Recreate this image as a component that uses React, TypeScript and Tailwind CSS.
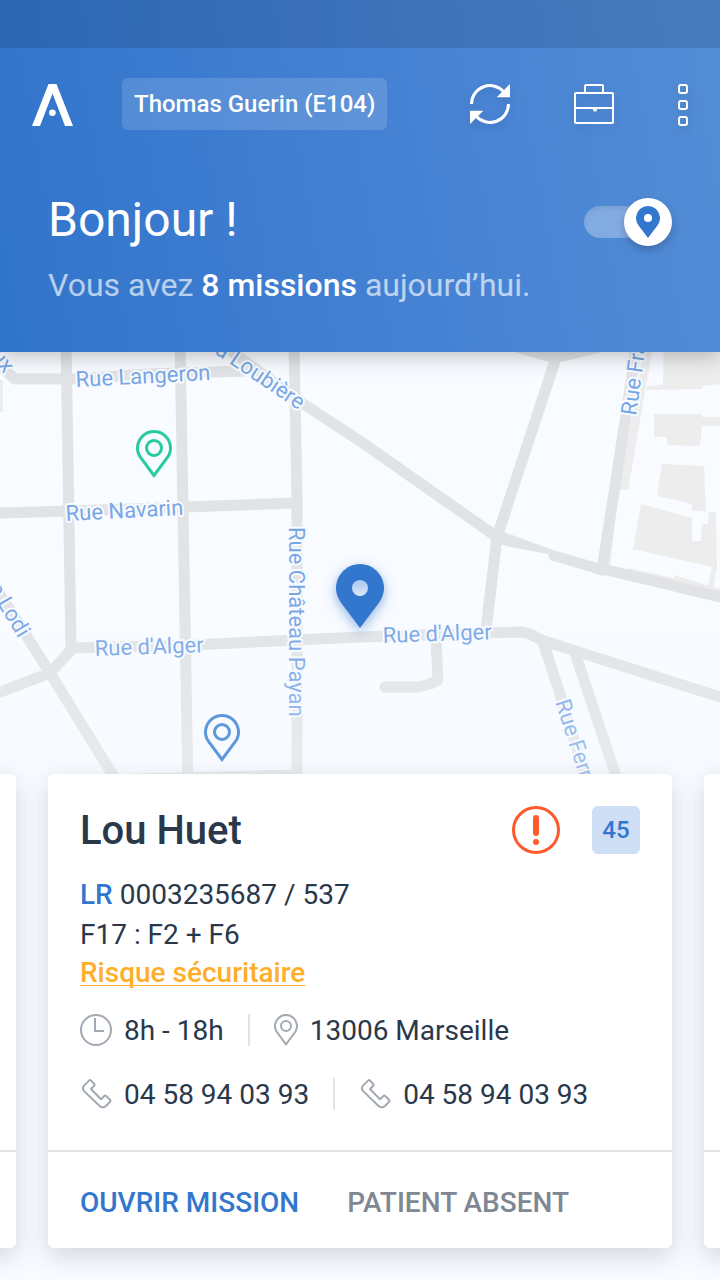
import { useState } from "react";

const PIN = "M18 45.5 L4.2 27 A16.5 16.5 0 1 1 31.8 27 Z";

const labels = [
  { text: "Rue Langeron", x: 76, y: 387, angle: -3 },
  { text: "Rue Navarin", x: 66, y: 521, angle: -3 },
  { text: "Rue d'Alger", x: 95, y: 656, angle: -2 },
  { text: "Rue d'Alger", x: 383, y: 643, angle: -2 },
  { text: "Rue Château Payan", x: 289, y: 527, angle: 90 },
  { text: "a Loubière", x: 214, y: 353, angle: 34 },
  { text: "e Lodi", x: -12, y: 588, angle: 59 },
  { text: "Rue Fra", x: 636, y: 416, angle: -82 },
  { text: "Rue Ferra", x: 555, y: 702, angle: 72 },
  { text: "ux", x: -10, y: 356, angle: 52 },
];

const roads = [
  "M66 340 L71 648",
  "M180 340 L188 790",
  "M294 340 L297 500 V790",
  "M0 366 L15 379 L72 379 L150 374 L245 371",
  "M195 325 L305 405 L360 441 L497 537",
  "M0 513 L72 511 L295 503",
  "M72 648 L190 645 L360 637 L522 632 Q530 633 541 640 L720 697",
  "M-14 572 L50 673 L122 790",
  "M-5 694 L50 673 L73 648",
  "M100 780 L297 775",
  "M556 358 L497 537 L486 630",
  "M638 335 L626 415 L602 570",
  "M603 569 L720 597",
  "M436 640 L438 680 L430 684 L418 687 H385",
  "M543 642 L561 697 L585 775",
  "M575 653 L620 788",
];

const buildings = [
  "664,340 720,340 720,384 702,386 702,389 647,390 647,386 663,385",
  "654,414 702,414 702,417 720,417 720,426 702,426 700,446 667,445 667,437 654,437",
  "662,464 704,466 706,511 692,511 692,504 657,496",
  "641,504 692,518 692,541 701,541 702,524 708,524 709,512 716,512 717,568 713,588 708,587 712,567 633,549",
  "628,568 674,578 674,575 720,589 720,598 628,574",
  "645,340 654,340 628,490 618,490 610,568 606,568",
  "0,380 3,380 3,412 0,412",
];

function CityMap() {
  return (
    <svg
      className="absolute inset-0 h-full w-full font-['Roboto',sans-serif]"
      viewBox="0 352 720 928"
      preserveAspectRatio="xMidYMin slice"
    >
      <defs>
        <linearGradient id="mapFade" x1="0" y1="0" x2="0" y2="1">
          <stop offset="0" stopColor="#f5f9fe" stopOpacity="0" />
          <stop offset="1" stopColor="#f5f9fe" stopOpacity="0.35" />
        </linearGradient>
        <linearGradient id="pinHole" x1="0" y1="0" x2="0" y2="1">
          <stop offset="0" stopColor="#a9c6ee" />
          <stop offset="1" stopColor="#dde9f8" />
        </linearGradient>
      </defs>
      {buildings.map((points) => (
        <polygon key={points} points={points} fill="#ededed" />
      ))}
      <g fill="none" stroke="#e1e3e6" strokeWidth="11" strokeLinejoin="round" strokeLinecap="round">
        {roads.map((d) => (
          <path key={d} d={d} />
        ))}
      </g>
      <polygon points="490,345 515,352 549,362 562,362 602,352 625,345" fill="#e1e3e6" />
      <polygon points="493,528 550,549 604,565 604,576 550,560 548,554 510,547 490,541" fill="#e1e3e6" />
      <g fontSize="22" fill="#79a6e5" stroke="#f8fbff" strokeWidth="4" strokeLinejoin="round">
        {labels.map((l) => (
          <text
            key={l.text + l.x}
            transform={`translate(${l.x} ${l.y}) rotate(${l.angle})`}
            className="[paint-order:stroke]"
          >
            {l.text}
          </text>
        ))}
      </g>
      <rect x="0" y="600" width="720" height="180" fill="url(#mapFade)" />
      <g fill="none" strokeWidth="3">
        <g transform="translate(136 430)" stroke="#27cb9c">
          <path d={PIN} />
          <circle cx="18" cy="18" r="7.5" />
        </g>
        <g transform="translate(204 714)" stroke="#5d97dc">
          <path d={PIN} />
          <circle cx="18" cy="18" r="7.5" />
        </g>
      </g>
      <g className="drop-shadow-[0_4px_6px_rgba(50,118,204,0.5)]">
        <path
          d="M360 628 L340.5 602 A24 24 0 1 1 379.5 602 Z"
          fill="#3376cd"
        />
      </g>
      <circle cx="360" cy="588" r="8" fill="url(#pinHole)" />
    </svg>
  );
}

function Logo() {
  return (
    <svg className="h-11 w-[42px]" viewBox="0 -2 42 44" fill="#fff">
      <path d="M16.5 0 H24.5 L41 42 H33 L20.5 9.5 L8 42 H0 Z" />
      <circle cx="20.4" cy="28.7" r="3.3" />
    </svg>
  );
}

function SyncIcon() {
  return (
    <svg className="h-10 w-10" viewBox="0 0 40 40" fill="none" stroke="#fff" strokeWidth="3">
      <path d="M1.5 20 A18.5 18.5 0 0 1 34 8" />
      <path d="M38.5 20 A18.5 18.5 0 0 1 6 32" />
      <path d="M40 0 V13.3 H26.7 Z M0 40 V26.7 H13.3 Z" fill="#fff" stroke="none" />
    </svg>
  );
}

function BriefcaseIcon() {
  return (
    <svg className="h-10 w-10" viewBox="0 0 40 40" fill="none" stroke="#fff" strokeWidth="2">
      <rect x="1" y="9" width="38" height="30" rx="1" />
      <path d="M11 9 V2 Q11 1 12 1 H28 Q29 1 29 2 V9 M1 24 H39" />
      <path d="M18.5 24.5 H23.5 L22.3 27.5 H19.7 Z" fill="#fff" stroke="none" />
    </svg>
  );
}

function MoreIcon() {
  return (
    <svg className="h-11 w-[10px]" viewBox="0 -2 10 44" fill="none" stroke="#fff" strokeWidth="2">
      <rect x="1" y="1" width="8" height="8" rx="2" />
      <rect x="1" y="17" width="8" height="8" rx="2" />
      <rect x="1" y="33" width="8" height="8" rx="2" />
    </svg>
  );
}

function ClockIcon() {
  return (
    <svg className="h-8 w-8" viewBox="0 0 32 32" fill="none" stroke="#a3a9b2" strokeWidth="2">
      <circle cx="16" cy="16" r="15" />
      <path d="M15 4 V17 H24" />
    </svg>
  );
}

function PlaceIcon() {
  return (
    <svg className="h-8 w-6" viewBox="0 0 36 48" fill="none" stroke="#a3a9b2" strokeWidth="3">
      <path d={PIN} />
      <circle cx="18" cy="18" r="7.5" />
    </svg>
  );
}

function PhoneIcon() {
  return (
    <svg
      className="h-8 w-8"
      viewBox="0 0 32 32"
      fill="none"
      stroke="#a3a9b2"
      strokeWidth="2"
      strokeLinejoin="round"
    >
      <path d="M9 2.6 Q10 1.6 11 2.6 L14.3 6 Q15 7 14.2 7.8 L11 11 L21 21.2 L24.4 18 Q25.3 17.2 26.2 18 L30 21.8 Q31 22.8 30 23.8 L26 28 Q22.6 30.6 19.6 28 L4.4 13.4 Q1.6 10.4 4 7.6 Z" />
    </svg>
  );
}

function AlertIcon() {
  return (
    <svg className="h-12 w-12" viewBox="0 0 48 48">
      <circle cx="24" cy="24" r="22.5" fill="none" stroke="#ff5a2b" strokeWidth="3" />
      <rect x="21" y="9" width="6" height="21" rx="3" fill="#ff5a2b" />
      <circle cx="24" cy="36" r="3" fill="#ff5a2b" />
    </svg>
  );
}

function Separator() {
  return <div className="mx-6 h-8 w-[2px] bg-[#e1e3e8]" />;
}

function Header() {
  const [located, setLocated] = useState(true);

  return (
    <header className="relative z-10 bg-[linear-gradient(80deg,#3074cb,#4783d4_60%,#538dd6)] text-white shadow-[0_4px_20px_rgba(0,0,0,0.25)]">
      <div className="h-12 bg-black/12" />
      <div className="flex h-28 items-center gap-12 px-8">
        <Logo />
        <button className="h-[52px] rounded-md bg-white/14 px-3 text-2xl font-medium whitespace-nowrap">
          Thomas Guerin (E104)
        </button>
        <div className="ml-auto flex items-center gap-16">
          <button aria-label="Synchroniser" className="drop-shadow-[0_4px_4px_rgba(0,0,0,0.12)]">
            <SyncIcon />
          </button>
          <button aria-label="Missions" className="drop-shadow-[0_4px_4px_rgba(0,0,0,0.12)]">
            <BriefcaseIcon />
          </button>
          <button aria-label="Menu" className="drop-shadow-[0_4px_4px_rgba(0,0,0,0.12)]">
            <MoreIcon />
          </button>
        </div>
      </div>
      <div className="px-12 pt-8 pb-[47px]">
        <div className="flex h-15 items-center justify-between">
          <h1 className="self-start text-5xl leading-14">Bonjour !</h1>
          <label className="relative flex h-12 w-[88px] items-center">
            <input
              type="checkbox"
              aria-label="Localisation"
              checked={located}
              onChange={() => setLocated(!located)}
              className="peer h-8 w-20 appearance-none rounded-full bg-white/30 shadow-[inset_0_2px_4px_rgba(0,0,0,0.08)]"
            />
            <span className="pointer-events-none absolute left-0 flex h-12 w-12 items-center justify-center rounded-full bg-white shadow-[0_4px_8px_rgba(0,0,0,0.2)] peer-checked:left-10">
              <svg className="h-8 w-6" viewBox="0 0 24 32">
                <path d="M12 32 L2.2 19 A12 12 0 1 1 21.8 19 Z" fill="#3376cd" />
                <circle cx="12" cy="12" r="4" fill="#fff" />
              </svg>
            </span>
          </label>
        </div>
        <p className="mt-[13px] text-[32px] leading-10 text-white/65">
          Vous avez <span className="font-medium text-white">8 missions</span> aujourd’hui.
        </p>
      </div>
    </header>
  );
}

const cardStyle =
  "flex w-[calc(100%-96px)] shrink-0 flex-col rounded-md bg-white shadow-[0_8px_24px_rgba(42,56,75,0.18)]";

function EmptyCard() {
  return (
    <div className={cardStyle}>
      <div className="mt-auto h-[98px] border-t-2 border-[#e1e3e8]" />
    </div>
  );
}

function MissionCard() {
  return (
    <article className={cardStyle}>
      <div className="px-8 pt-8 pb-10 text-[28px]">
        <div className="flex h-12 items-center gap-8">
          <h2 className="mr-auto pt-0.5 text-[40px] leading-12 font-medium">Lou Huet</h2>
          <AlertIcon />
          <div className="flex h-12 w-12 items-center justify-center rounded-md bg-[#cedef4] text-2xl font-medium text-[#3376cd]">
            45
          </div>
        </div>
        <div className="mt-[21px] mb-[23px]">
          <p className="leading-10">
            <span className="font-medium text-[#3376cd]">LR</span> 0003235687 / 537
          </p>
          <p className="leading-10">F17 : F2 + F6</p>
          <a
            href="#risque"
            className="block w-fit leading-9 font-medium text-[#ffae2b] underline decoration-1 underline-offset-3 [text-decoration-skip-ink:none]"
          >
            Risque sécuritaire
          </a>
        </div>
        <div className="flex h-8 items-center">
          <ClockIcon />
          <span className="ml-3 pt-0.5">8h - 18h</span>
          <Separator />
          <PlaceIcon />
          <span className="ml-3 pt-0.5">13006 Marseille</span>
        </div>
        <div className="mt-8 flex h-8 items-center">
          <a href="tel:0458940393" className="flex items-center gap-3">
            <PhoneIcon />
            <span className="pt-0.5">04 58 94 03 93</span>
          </a>
          <Separator />
          <a href="tel:0458940393" className="flex items-center gap-3">
            <PhoneIcon />
            <span className="pt-0.5">04 58 94 03 93</span>
          </a>
        </div>
      </div>
      <div className="flex h-[98px] items-center gap-12 border-t-2 border-[#e1e3e8] px-8 pt-1.5 text-[28px] font-medium">
        <button className="text-[#3376cd]">OUVRIR MISSION</button>
        <button className="text-[#7e8792]">PATIENT ABSENT</button>
      </div>
    </article>
  );
}

export default function App() {
  return (
    <div className="flex min-h-screen flex-col bg-[#f8fbff] font-['Roboto',sans-serif] text-[#2a384b]">
      <Header />
      <main className="relative flex flex-1 flex-col overflow-hidden">
        <CityMap />
        <div className="relative mt-auto flex justify-center gap-8 pt-12 pb-8">
          <EmptyCard />
          <MissionCard />
          <EmptyCard />
        </div>
      </main>
    </div>
  );
}
